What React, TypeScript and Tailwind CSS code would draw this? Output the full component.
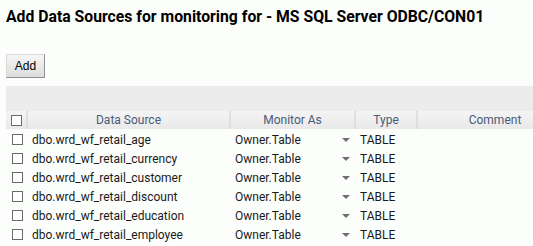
import React from 'react';

const ROWS = [
  'dbo.wrd_wf_retail_age',
  'dbo.wrd_wf_retail_currency',
  'dbo.wrd_wf_retail_customer',
  'dbo.wrd_wf_retail_discount',
  'dbo.wrd_wf_retail_education',
  'dbo.wrd_wf_retail_employee',
];

const Box: React.FC = () => (
  <span className="block w-[11px] h-[11px] border border-[#6b6b6b] bg-white" />
);

const App: React.FC = () => {
  return (
    <div className="w-[533px] h-[246px] overflow-hidden bg-[#fcfefc] font-['Roboto',sans-serif] text-[12px] text-[#1a1a1a]">
      {/* Title */}
      <h1 className="pl-[6px] pt-[7px] text-[15.75px] leading-[20px] font-bold text-black whitespace-nowrap">
        Add Data Sources for monitoring for - MS SQL Server ODBC/CON01
      </h1>

      {/* Add button */}
      <div className="pl-[6px] pt-[27px]">
        <button className="w-[39px] h-[24px] border border-[#8f8f8f] border-t-[#d8d8d8] border-l-[#d8d8d8] bg-gradient-to-b from-[#f7f7f7] to-[#dcdcdc] text-[12px] text-black font-['Liberation_Sans',Arial,sans-serif]">
          Add
        </button>
      </div>

      {/* Grid */}
      <div className="ml-[6px] mt-[8px] w-[566px]">
        <div className="h-[25px] bg-[#ececec]" />
        <div className="flex h-[18px] bg-gradient-to-b from-[#f4f4f4] to-[#e9e9e9] text-[#4a5a7a] leading-[18px]">
          <div className="w-[22px] shrink-0 flex items-center justify-center border-r-2 border-[#dedede]">
            <Box />
          </div>
          <div className="w-[203px] shrink-0 text-center border-r-2 border-[#dedede]">Data Source</div>
          <div className="w-[125px] shrink-0 text-center border-r-2 border-[#dedede]">Monitor As</div>
          <div className="w-[62px] shrink-0 text-center border-r-2 border-[#dedede]">Type</div>
          <div className="flex-1 text-center">Comment</div>
        </div>
        <div className="pt-[1px]">
          {ROWS.map((r) => (
            <div key={r} className="flex h-[19px] items-center">
              <div className="w-[22px] shrink-0 flex justify-center">
                <Box />
              </div>
              <div className="w-[203px] shrink-0 pl-[4px]">{r}</div>
              <div className="w-[125px] shrink-0 flex items-center justify-between pl-[4px] pr-[6px]">
                <span>Owner.Table</span>
                <svg width="8" height="4" viewBox="0 0 8 4">
                  <path d="M0 0h8L4 4z" fill="#6e6e6e" />
                </svg>
              </div>
              <div className="w-[62px] shrink-0 pl-[4px]">TABLE</div>
              <div className="flex-1" />
            </div>
          ))}
        </div>
      </div>
    </div>
  );
};

export default App;
